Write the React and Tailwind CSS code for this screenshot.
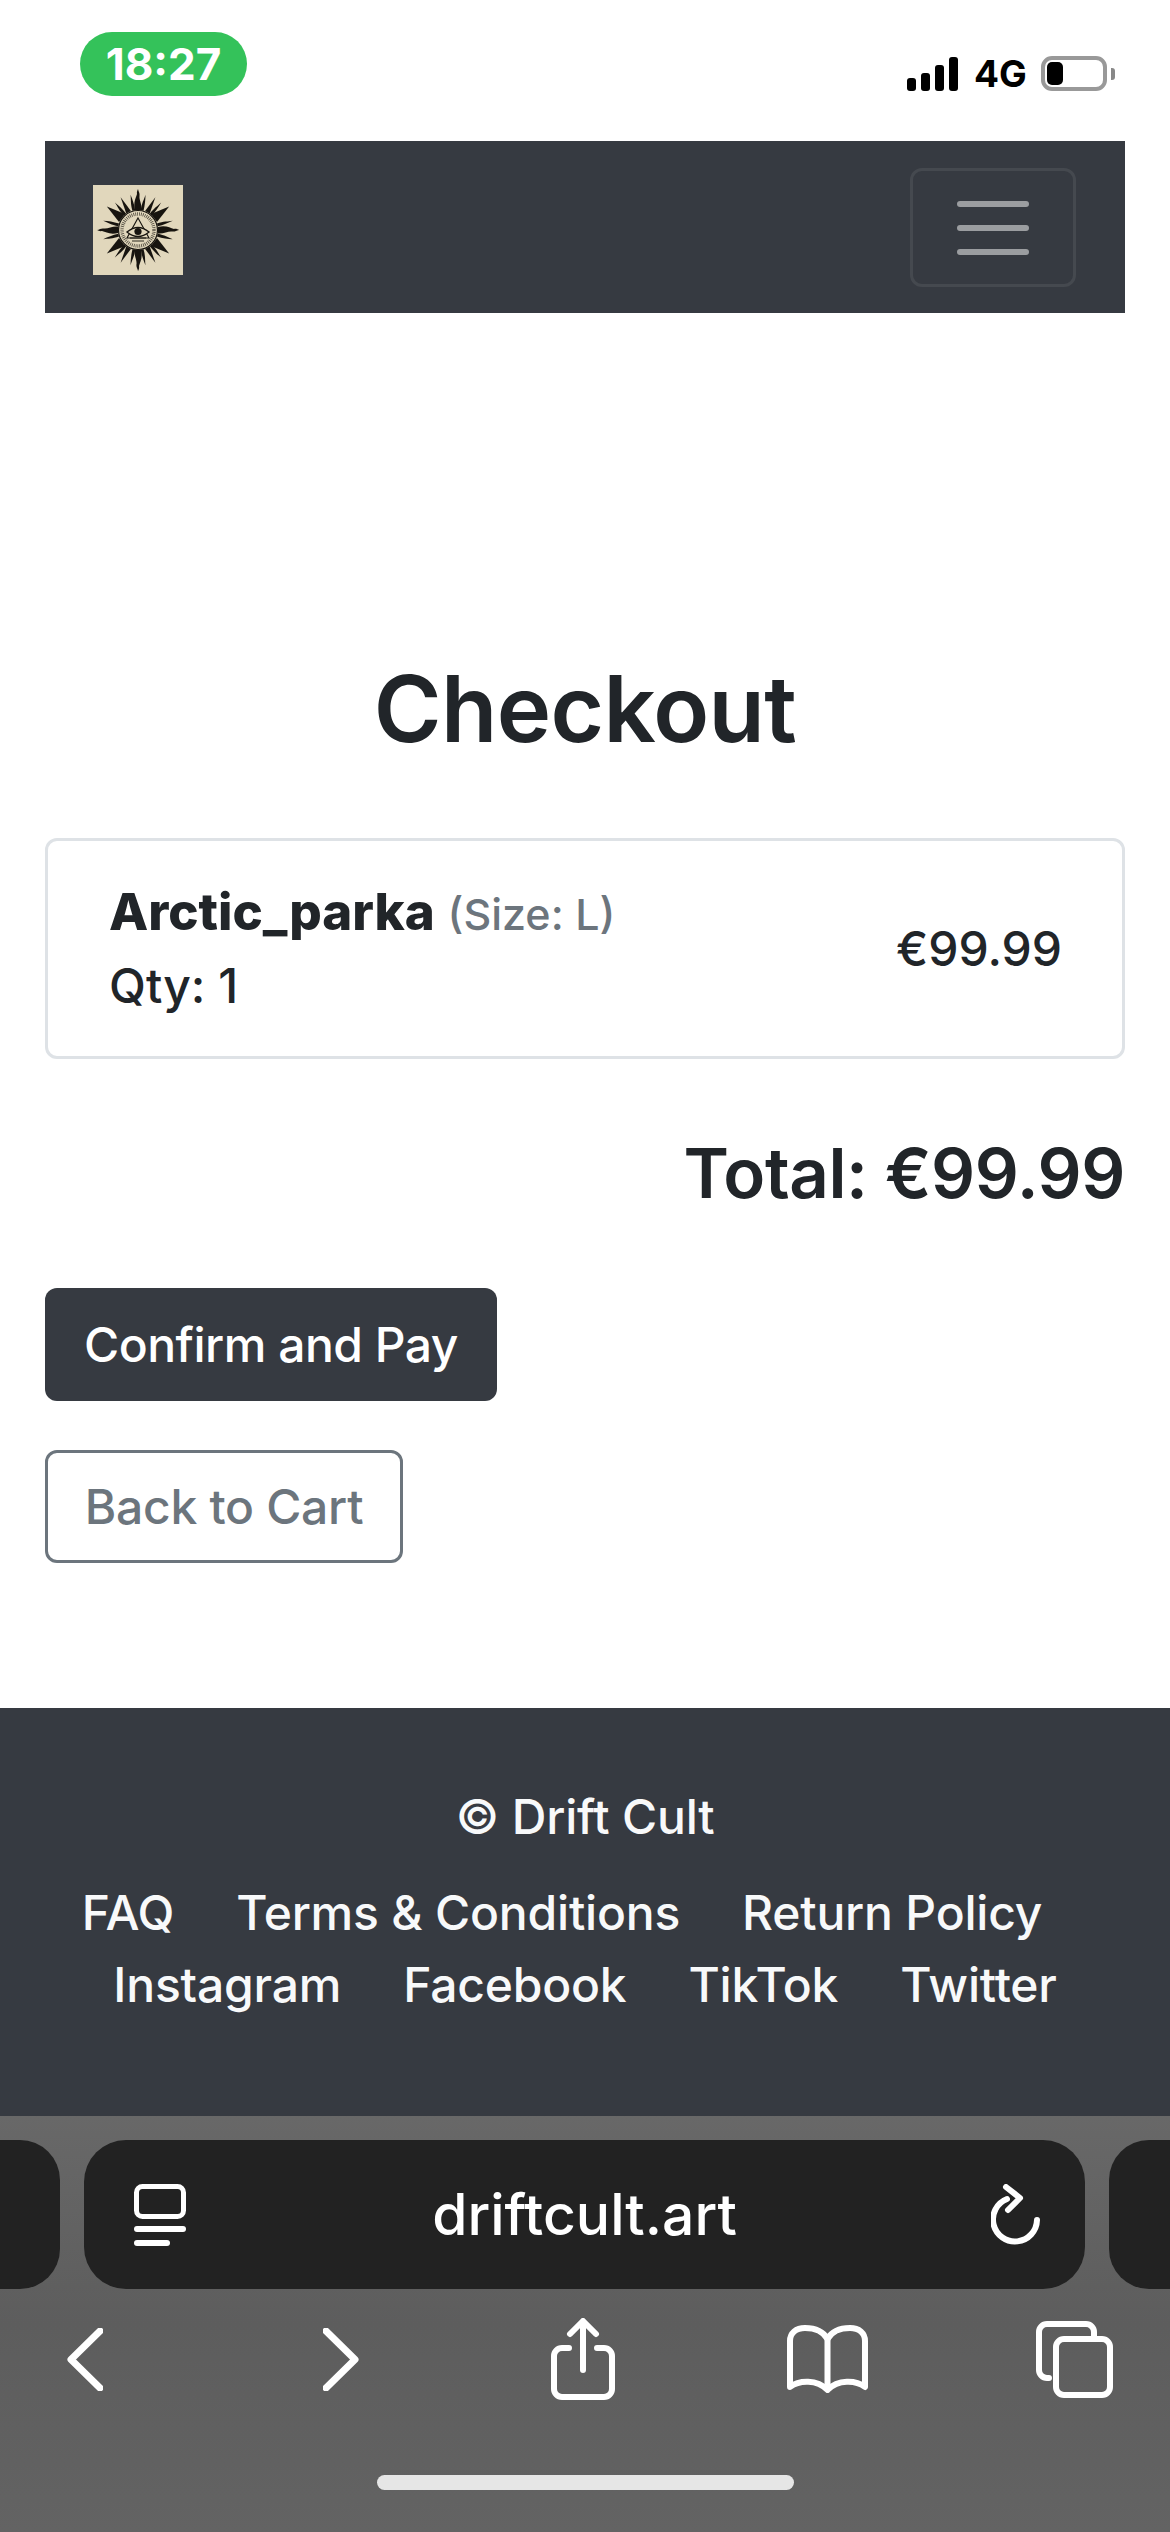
const BIG = 'M-3 -20 C-5 -28 -2 -32 -1 -36 C-1.5 -38 -0.5 -40 0 -41 C0.6 -38 2 -37 1.5 -34 C1 -30 4 -26 3.5 -20 Z'
const TRIANGLE = 'M-5 -20 L0 -39 L5 -20 Z'
const MEDIUM = 'M-2.6 -20 L0 -37 L2.6 -20 Z'
const THIN = 'M-1.4 -20 C-2 -27 -0.4 -31 0 -36 C1 -31 1.6 -26 1.4 -20 Z'

// first quadrant of the sun, mirrored across both axes
const QUADRANT = [
  { a: 12, d: THIN },
  { a: 28, d: MEDIUM },
  { a: 40, d: THIN },
  { a: 53, d: TRIANGLE },
  { a: 75, d: THIN },
]
const RAYS = [
  { a: 0, d: BIG }, { a: 90, d: BIG }, { a: 180, d: BIG }, { a: 270, d: BIG },
  ...QUADRANT.flatMap(r => [r.a, 180 - r.a, 180 + r.a, 360 - r.a].map(a => ({ a, d: r.d }))),
]

function Logo() {
  return (
    <svg width="90" height="90" viewBox="0 0 90 90" className="block mt-[6px]">
      <rect width="90" height="90" fill="#e1d7bc" />
      {RAYS.map(r => (
        <path key={r.a} d={r.d} fill="#17140f" transform={`translate(45 45) rotate(${r.a})`} />
      ))}
      <circle cx="45" cy="45" r="19.5" fill="#e1d7bc" stroke="#17140f" strokeWidth="1.2" />
      <circle cx="45" cy="45" r="16" fill="none" stroke="#4f4a3e" strokeWidth="3.4" strokeDasharray="0.8 1.1" />
      <path d="M45 33 L56 53 H34 Z" fill="#e1d7bc" stroke="#17140f" strokeWidth="1.1" />
      <path d="M34 47 Q45 38 56 47 Q45 56 34 47 Z" fill="#e1d7bc" stroke="#17140f" strokeWidth="1.4" />
      <circle cx="45" cy="46.5" r="3.6" fill="#17140f" />
      <path d="M37 53 H53 M39 56 H51" stroke="#17140f" strokeWidth="0.9" />
    </svg>
  )
}

function StatusBar() {
  return (
    <div className="h-[141px] flex items-start justify-between">
      <div className="ml-[80px] mt-[32px] w-[167px] h-[64px] rounded-[32px] bg-[#34c25a] text-white text-[44px] leading-[64px] font-bold text-center">
        18:27
      </div>
      <div className="mt-[56px] mr-[55px] flex items-end h-[35px]">
        <div className="flex items-end gap-[5px] h-[34px]">
          <div className="w-[9px] h-[13px] rounded-[3px] bg-black" />
          <div className="w-[9px] h-[18px] rounded-[3px] bg-black" />
          <div className="w-[9px] h-[26px] rounded-[3px] bg-black" />
          <div className="w-[9px] h-[34px] rounded-[3px] bg-black" />
        </div>
        <div className="ml-[16px] w-[51px] text-[37px] leading-[35px] font-bold text-black">4G</div>
        <div className="ml-[16px] w-[66px] h-[35px] border-[4px] border-[#999999] rounded-[11px] p-[2px]">
          <div className="w-[16px] h-[23px] bg-black rounded-[5px]" />
        </div>
        <div className="ml-[4px] mb-[11px] w-[4px] h-[12px] bg-[#888888] rounded-r-[3px]" />
      </div>
    </div>
  )
}

function Navbar() {
  return (
    <nav className="mx-[45px] h-[172px] bg-[#363a41] flex items-center justify-between pl-[48px] pr-[49px]">
      <Logo />
      <button className="w-[166px] h-[119px] border-[3px] border-[#45494f] rounded-[12px] flex flex-col items-center pt-[30px] gap-[18px]">
        <span className="block w-[72px] h-[6px] rounded-[3px] bg-[#9b9da0]" />
        <span className="block w-[72px] h-[6px] rounded-[3px] bg-[#9b9da0]" />
        <span className="block w-[72px] h-[6px] rounded-[3px] bg-[#9b9da0]" />
      </button>
    </nav>
  )
}

function Checkout() {
  return (
    <main className="h-[1395px] px-[45px] pt-[346px] text-[#212529]">
      <h1 className="text-center text-[92px] leading-[100px] font-semibold tracking-[-0.6px]">Checkout</h1>
      <div className="mt-[79px] h-[221px] border-[3px] border-[#dee2e6] rounded-[12px] pl-[61px] pr-[60px] flex items-center justify-between">
        <div className="text-[48px] leading-[72px] font-medium">
          <div>
            <span className="text-[51px] font-extrabold">Arctic_parka</span>{' '}
            <span className="text-[43px] text-[#6c757d]">(Size: L)</span>
          </div>
          <div>Qty: 1</div>
        </div>
        <div className="text-[48px] leading-[72px] font-medium">€99.99</div>
      </div>
      <div className="mt-[72px] text-right text-[69px] leading-[84px] font-semibold tracking-[-0.4px]">Total: €99.99</div>
      <div className="mt-[73px]">
        <button className="block w-[452px] h-[113px] rounded-[12px] bg-[#363a41] text-white text-[48px] font-medium tracking-[-0.5px]">Confirm and Pay</button>
        <button className="block mt-[49px] w-[358px] h-[113px] rounded-[12px] border-[3px] border-[#6c757d] text-[#6c757d] text-[48px] font-medium tracking-[-0.3px]">Back to Cart</button>
      </div>
    </main>
  )
}

function Footer() {
  return (
    <footer className="h-[408px] bg-[#363a41] text-[#f8f9fa] text-[48px] leading-[72px] font-medium tracking-[-0.2px] text-center pt-[73px]">
      <div>© Drift Cult</div>
      <div className="mt-[24px] pr-[46px] flex justify-center gap-x-[62px]">
        <a>FAQ</a>
        <a>Terms &amp; Conditions</a>
        <a>Return Policy</a>
      </div>
      <div className="flex justify-center gap-x-[62px]">
        <a>Instagram</a>
        <a>Facebook</a>
        <a>TikTok</a>
        <a>Twitter</a>
      </div>
    </footer>
  )
}

function SafariBar() {
  return (
    <div className="h-[416px] bg-gradient-to-b from-[#686868] via-[#5d5d5d] to-[#636363] pt-[24px] overflow-hidden">
      <div className="flex h-[149px] gap-[24px] -ml-[60px]">
        <div className="w-[120px] shrink-0 rounded-[40px] bg-[#222222]" />
        <div className="w-[1001px] shrink-0 rounded-[42px] bg-[#222222] flex items-center justify-between pl-[50px] pr-[44px] text-white">
          <svg width="52" height="62" viewBox="0 0 52 62" fill="none" className="shrink-0">
            <rect x="2.5" y="2.5" width="47" height="30" rx="6" stroke="white" strokeWidth="5" />
            <rect x="0" y="42" width="52" height="6" rx="3" fill="white" />
            <rect x="0" y="56" width="36" height="6" rx="3" fill="white" />
          </svg>
          <span className="mr-[8px] text-[57px] leading-[72px] font-medium">driftcult.art</span>
          <svg width="50" height="62" viewBox="0 0 50 62" fill="none" stroke="white" strokeWidth="6" strokeLinecap="round" strokeLinejoin="round" className="shrink-0">
            <path d="M16 15 A22 22 0 1 0 46 36" />
            <path d="M15 3 L29 14 L17 26" />
          </svg>
        </div>
        <div className="w-[120px] shrink-0 rounded-[40px] bg-[#222222]" />
      </div>
      <div className="flex items-center h-[82px] mt-[29px] pl-[67px]">
        <svg width="36" height="63" viewBox="0 0 36 63" fill="none" stroke="white" strokeWidth="7" strokeLinecap="round" strokeLinejoin="round">
          <path d="M33 3 L4 31.5 L33 60" />
        </svg>
        <svg width="36" height="63" viewBox="0 0 36 63" fill="none" stroke="white" strokeWidth="7" strokeLinecap="round" strokeLinejoin="round" className="ml-[220px]">
          <path d="M3 3 L32 31.5 L3 60" />
        </svg>
        <svg width="64" height="82" viewBox="0 0 64 82" fill="none" stroke="white" strokeWidth="6" strokeLinecap="round" strokeLinejoin="round" className="ml-[192px]">
          <path d="M18 30 H11 A8 8 0 0 0 3 38 V71 A8 8 0 0 0 11 79 H53 A8 8 0 0 0 61 71 V38 A8 8 0 0 0 53 30 H46" />
          <path d="M32 52 V4" />
          <path d="M19 16 L32 3 L45 16" />
        </svg>
        <svg width="81" height="68" viewBox="0 0 81 68" fill="none" stroke="white" strokeWidth="6" strokeLinecap="round" strokeLinejoin="round" className="ml-[172px]">
          <path d="M40.5 14 C36 6 28 3 18 3 C9 3 3 8 3 16 V62 C12 55 30 54 40.5 65 C51 54 69 55 78 62 V16 C78 8 72 3 63 3 C53 3 45 6 40.5 14 Z" />
          <path d="M40.5 14 V60" />
        </svg>
        <svg width="77" height="77" viewBox="0 0 77 77" fill="none" stroke="white" strokeWidth="6" strokeLinecap="round" strokeLinejoin="round" className="ml-[168px]">
          <path d="M13 57 H11 A8 8 0 0 1 3 49 V11 A8 8 0 0 1 11 3 H50 A8 8 0 0 1 58 11 V17" />
          <rect x="20" y="18" width="54" height="56" rx="8" />
        </svg>
      </div>
      <div className="mt-[75px] mx-auto w-[417px] h-[15px] rounded-full bg-[#e6e6e6]" />
    </div>
  )
}

export default function App() {
  return (
    <div className="w-[1170px] h-[2532px] bg-white overflow-hidden font-['Inter','Noto_Sans',sans-serif]">
      <StatusBar />
      <Navbar />
      <Checkout />
      <Footer />
      <SafariBar />
    </div>
  )
}
